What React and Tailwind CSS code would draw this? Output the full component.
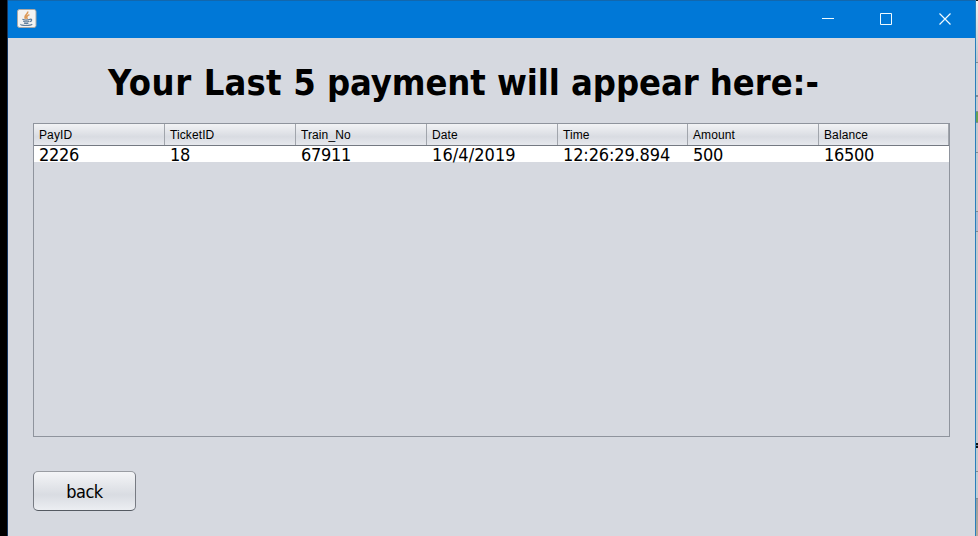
const columns = [
  { title: 'PayID', value: '2226', tracking: 'tracking-[-0.3px]' },
  { title: 'TicketID', value: '18', tracking: 'tracking-[-0.3px]' },
  { title: 'Train_No', value: '67911', tracking: 'tracking-[-0.3px]' },
  { title: 'Date', value: '16/4/2019', tracking: 'tracking-[0.08px]' },
  { title: 'Time', value: '12:26:29.894', tracking: 'tracking-[-0.14px]' },
  { title: 'Amount', value: '500', tracking: 'tracking-[-0.3px]' },
  { title: 'Balance', value: '16500', tracking: 'tracking-[-0.3px]' },
];

const grid = 'grid grid-cols-[131px_131px_131px_131px_130px_131px_130px]';
const tahoma = "font-['DejaVu_Sans_Condensed','DejaVu_Sans',sans-serif] [font-stretch:condensed]";

function JavaIcon() {
  return (
    <svg width="20" height="20" viewBox="0 0 20 20" fill="none">
      <rect x="0.5" y="0.5" width="18.5" height="18" rx="2" fill="#f3f3f2" stroke="#aaa9a7" />
      <path d="M10.7 2.5C11.5 5.4 6.3 6.2 8.5 9.8M12.4 5.6C9.5 7 9.1 8 10.4 10" stroke="#dd9a58" strokeWidth="1.6" />
      <path d="M5.4 10.2c2 .9 5.5.9 7.7 0M6.2 12.2c2 .8 4.3.8 6 0M7 14.1c1.6.6 3 .6 4.4 0M13.1 10.3c2.2-.6 2 2-.4 2.4M3.9 15.1c-1 1.7 9.6 2 11.3.1" stroke="#627f9c" strokeWidth="1.2" />
    </svg>
  );
}

function TitleBar() {
  return (
    <header className="flex h-[38px] items-start justify-between border-t border-[#1267ad] bg-[#0078d7]">
      <div className="pt-2 pl-[9px]"><JavaIcon /></div>
      <svg width="175" height="37" viewBox="800 1 175 37" fill="none" stroke="#effaff">
        <path d="M822 18.5h12" />
        <path d="M880.5 13.5h11v11h-11z" />
        <path d="m939.5 13.5 11 11m0-11-11 11" strokeWidth="1.2" />
      </svg>
    </header>
  );
}

function PaymentsTable() {
  return (
    <div className="mt-[18px] ml-[25px] h-[314px] w-[917px] border border-[#8f949d]">
      <div className={`${grid} h-[22px] border-b border-[#747982] bg-linear-to-b from-[#f2f3f5] via-[#d9dce2] via-60% to-[#e6e8ed] font-['Liberation_Sans',Arial,sans-serif] text-[12px] leading-[23px] tracking-[0.1px]`}>
        {columns.map((c) => (
          <div key={c.title} className="h-[21px] border-r border-[#a1a5ac] pl-[5px]">{c.title}</div>
        ))}
      </div>
      <div className={`${grid} ${tahoma} h-4 bg-white text-[18px] leading-[17px]`}>
        {columns.map((c) => (
          <div key={c.title} className={`pl-[5px] ${c.tracking}`}>{c.value}</div>
        ))}
      </div>
    </div>
  );
}

function Backdrop() {
  return (
    <div className="flex w-[2px] flex-col bg-[#c2c8cd]">
      <div className="h-px bg-[#151515]" />
      <div className="h-[61px] bg-linear-to-b from-[#f2f2f2] to-[#bfc5cb]" />
      <div className="h-[34px] border-y border-[#858b91] bg-[#c9ced3]" />
      <div className="h-4 border-y border-[#858b91]" />
      <div className="h-[10px] bg-[#6ba054]" />
      <div className="h-[31px] border-y border-[#858b91]" />
      <div className="h-[59px] border-b border-[#858b91]" />
      <div className="h-5 border-b border-[#858b91] bg-[#aabbd2]" />
      <div className="h-[211px]" />
      <div className="h-[5px] border-y-2 border-[#111] bg-[#75808a]" />
      <div className="h-6 border-b border-[#858b91]" />
      <div className="h-[27px] border-b border-[#858b91] bg-[#c3cbd1]" />
      <div className="flex-1 bg-linear-to-b from-[#989da1] to-[#b5aa98]" />
    </div>
  );
}

export default function App() {
  return (
    <div className="flex h-[536px] w-[978px] overflow-hidden bg-black text-black">
      <div className="w-[7px] bg-black" />
      <main className="flex w-[969px] flex-col border-r border-l border-r-[#287fbd] border-l-[#17365f] bg-[#d6d9e0]">
        <TitleBar />
        <h1 className={`${tahoma} mt-[23px] ml-[100px] h-[44px] text-[36px] leading-[44px] font-bold whitespace-nowrap`}>
          <span className="tracking-[0.6px]">Your </span>
          <span className="tracking-[0.2px]">Last </span>
          <span className="tracking-[-0.07px]">5 payment will appear here:-</span>
        </h1>
        <PaymentsTable />
        <button className={`${tahoma} mt-[34px] ml-[25px] h-10 w-[103px] rounded-[5px] border border-[#777b83] border-t-[#9a9da3] border-b-[#555a62] bg-linear-to-b from-[#f4f5f7] via-[#d9dce2] via-60% to-[#eceef2] text-[18px] tracking-[-0.5px]`}>
          back
        </button>
      </main>
      <Backdrop />
    </div>
  );
}
